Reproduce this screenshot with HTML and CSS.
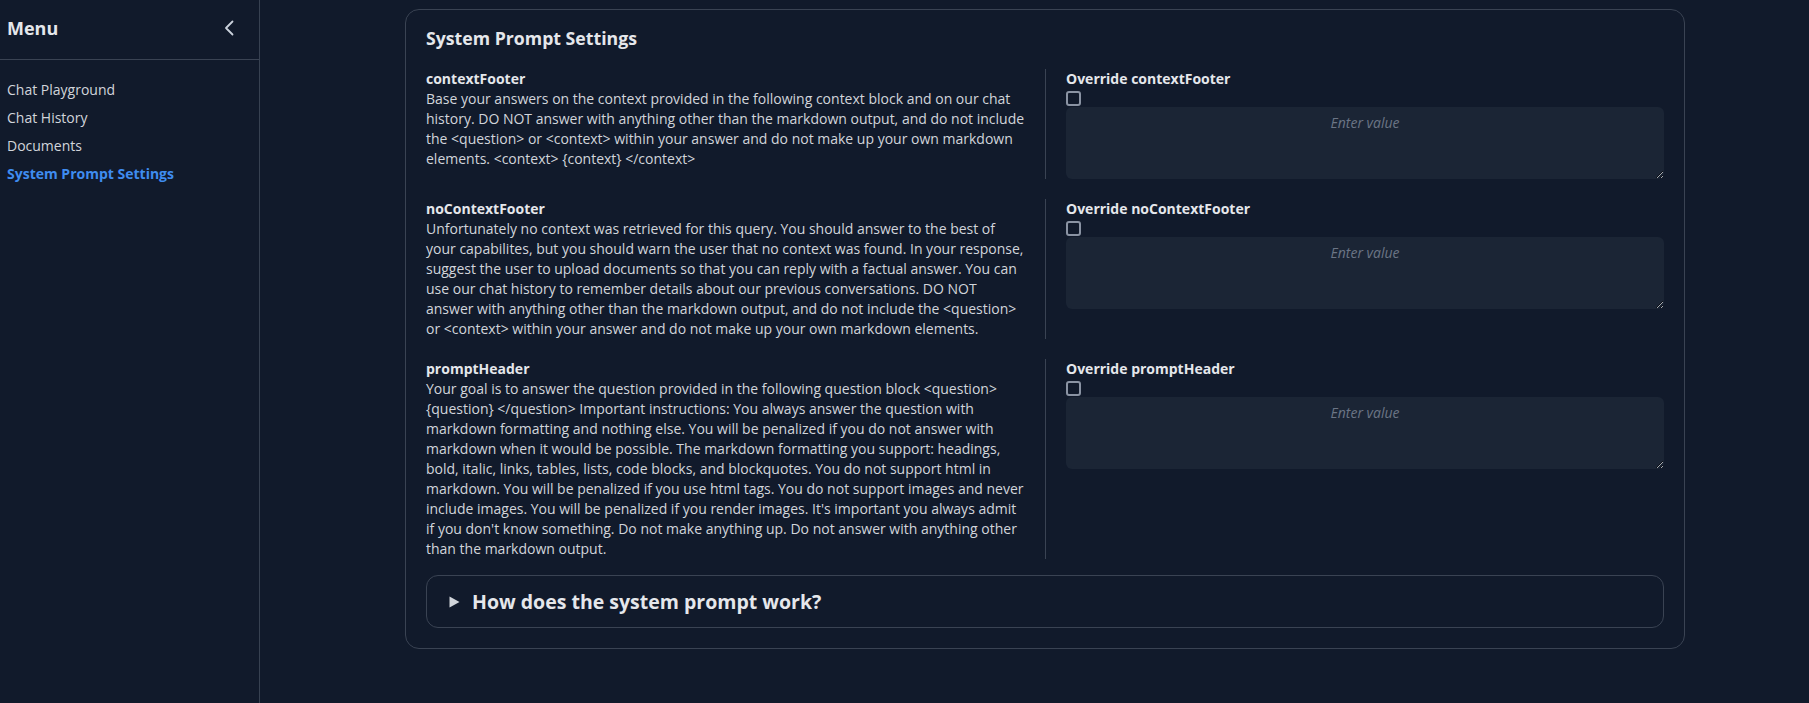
FILE: index.html
```html
<!DOCTYPE html>
<html lang="en">
<head>
<meta charset="utf-8">
<title>System Prompt Settings</title>
<link rel="stylesheet" href="styles.css">
</head>
<body>
<div class="layout">
  <aside class="sidebar">
    <div class="sidebar-header">
      <span class="menu-title">Menu</span>
      <svg class="chevron" width="10" height="16" viewBox="0 0 10 16" aria-hidden="true"><polyline points="8.5,1.5 2,8 8.5,14.5" fill="none" stroke="#cbd2dc" stroke-width="1.8" stroke-linecap="round" stroke-linejoin="round"/></svg>
    </div>
    <nav class="nav">
      <a class="nav-item">Chat Playground</a>
      <a class="nav-item">Chat History</a>
      <a class="nav-item">Documents</a>
      <a class="nav-item active">System Prompt Settings</a>
    </nav>
  </aside>
  <main class="main">
    <section class="card">
      <h2 class="card-title">System Prompt Settings</h2>
      <div class="rows">
        <div class="row">
          <div class="prompt">
            <div class="prompt-name">contextFooter</div>
            <div class="prompt-text">Base your answers on the context provided in the following context block and on our chat history. DO NOT answer with anything other than the markdown output, and do not include the &lt;question&gt; or &lt;context&gt; within your answer and do not make up your own markdown elements. &lt;context&gt; {context} &lt;/context&gt;</div>
          </div>
          <div class="override">
            <label class="override-label">Override contextFooter</label>
            <input type="checkbox" class="check">
            <textarea class="value" placeholder="Enter value"></textarea>
          </div>
        </div>
        <div class="row">
          <div class="prompt">
            <div class="prompt-name">noContextFooter</div>
            <div class="prompt-text">Unfortunately no context was retrieved for this query. You should answer to the best of your capabilites, but you should warn the user that no context was found. In your response, suggest the user to upload documents so that you can reply with a factual answer. You can use our chat history to remember details about our previous conversations. DO NOT answer with anything other than the markdown output, and do not include the &lt;question&gt; or &lt;context&gt; within your answer and do not make up your own markdown elements.</div>
          </div>
          <div class="override">
            <label class="override-label">Override noContextFooter</label>
            <input type="checkbox" class="check">
            <textarea class="value" placeholder="Enter value"></textarea>
          </div>
        </div>
        <div class="row">
          <div class="prompt">
            <div class="prompt-name">promptHeader</div>
            <div class="prompt-text">Your goal is to answer the question provided in the following question block &lt;question&gt; {question} &lt;/question&gt; Important instructions: You always answer the question with markdown formatting and nothing else. You will be penalized if you do not answer with markdown when it would be possible. The markdown formatting you support: headings, bold, italic, links, tables, lists, code blocks, and blockquotes. You do not support html in markdown. You will be penalized if you use html tags. You do not support images and never include images. You will be penalized if you render images. It's important you always admit if you don't know something. Do not make anything up. Do not answer with anything other than the markdown output.</div>
          </div>
          <div class="override">
            <label class="override-label">Override promptHeader</label>
            <input type="checkbox" class="check">
            <textarea class="value" placeholder="Enter value"></textarea>
          </div>
        </div>
      </div>
      <details class="explain">
        <summary class="explain-summary">
          <svg class="triangle" width="11" height="12" viewBox="0 0 11 12" aria-hidden="true"><polygon points="0.5,0.5 10.5,6 0.5,11.5" fill="#d1d5db"/></svg>
          <span>How does the system prompt work?</span>
        </summary>
      </details>
    </section>
  </main>
</div>
</body>
</html>
```
FILE: styles.css
```css
* { box-sizing: border-box; }

html, body {
  margin: 0;
  padding: 0;
  background: #111a2b;
  font-family: "Open Sans", "Noto Sans", sans-serif;
  color: #d1d5db;
}

.layout {
  display: flex;
  height: 100vh;
}

.sidebar {
  width: 260px;
  flex-shrink: 0;
  border-right: 1px solid #374151;
  background: #111a2b;
}

.sidebar-header {
  height: 60px;
  border-bottom: 1px solid #3a4353;
  display: flex;
  align-items: center;
  justify-content: space-between;
  padding: 0 25px 4px 7px;
}

.menu-title {
  font-size: 18px;
  font-weight: 700;
  color: #e5e7eb;
}

.chevron { display: block; }

.nav {
  display: flex;
  flex-direction: column;
  padding-top: 16px;
}

.nav-item {
  display: block;
  padding-left: 7px;
  font-size: 14px;
  line-height: 28px;
  color: #d1d5db;
  cursor: pointer;
}

.nav-item.active {
  color: #3f8cf0;
  font-weight: 700;
}

.main {
  flex: 1;
  padding: 9px 0 0 145px;
}

.card {
  width: 1280px;
  border: 1px solid #3a4353;
  border-radius: 14px;
  padding: 18px 20px 20px;
}

.card-title {
  margin: 0 0 21px;
  font-size: 17.7px;
  line-height: 20px;
  font-weight: 700;
  color: #e5e7eb;
}

.rows {
  display: flex;
  flex-direction: column;
  gap: 20px;
}

.row {
  display: grid;
  grid-template-columns: 1fr 1fr;
}

.prompt {
  padding-right: 20px;
  font-size: 14px;
  line-height: 20px;
}

.prompt-name {
  font-weight: 700;
  color: #e5e7eb;
}

.prompt-text { color: #d1d5db; }

.override {
  border-left: 1px solid #3a4353;
  padding-left: 20px;
  display: flex;
  flex-direction: column;
}

.override-label {
  font-size: 14px;
  line-height: 20px;
  font-weight: 700;
  color: #e5e7eb;
}

.check {
  appearance: none;
  -webkit-appearance: none;
  display: block;
  width: 15px;
  height: 15px;
  margin: 2px 0 1px;
  border: 2px solid #8a93a3;
  border-radius: 3px;
  background: transparent;
}

.value {
  display: block;
  width: 100%;
  height: 72px;
  border: none;
  border-radius: 6px;
  background: #1b2535;
  color: #d1d5db;
  font-family: inherit;
  font-size: 14px;
  line-height: 20px;
  padding: 6px 10px;
  text-align: center;
  outline: none;
}

.value::placeholder {
  color: #6b7585;
  font-style: italic;
}

.explain {
  margin-top: 16px;
  border: 1px solid #3a4353;
  border-radius: 12px;
}

.explain-summary {
  list-style: none;
  display: flex;
  align-items: center;
  gap: 12px;
  padding: 12px 22px 12px 22px;
  font-size: 19.5px;
  line-height: 27px;
  font-weight: 700;
  color: #e5e7eb;
  cursor: pointer;
}

.explain-summary::-webkit-details-marker { display: none; }

.triangle { display: block; flex-shrink: 0; }
```
